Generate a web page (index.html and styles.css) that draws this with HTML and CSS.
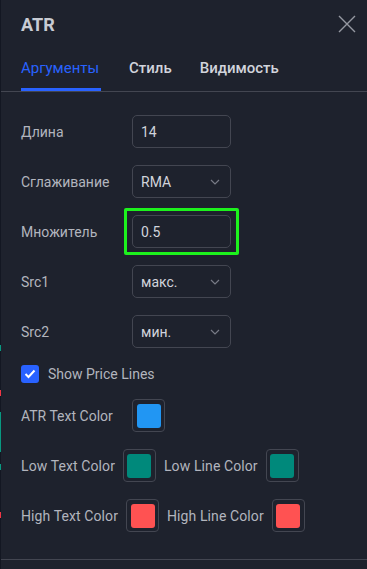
FILE: index.html
```html
<!DOCTYPE html>
<html lang="ru">
<head>
  <meta charset="UTF-8" />
  <meta name="viewport" content="width=device-width, initial-scale=1.0" />
  <title>ATR</title>
  <link rel="stylesheet" href="styles.css">
</head>
<body>
  <div class="edge">
    <span class="mark mark-green" style="top:345px"></span>
    <span class="mark mark-red" style="top:390px"></span>
    <span class="mark mark-teal" style="top:412px;height:40px"></span>
    <span class="mark mark-teal" style="top:464px"></span>
    <span class="mark mark-red" style="top:512px"></span>
  </div>

  <div class="dialog">
    <div class="header">
      <span class="title">ATR</span>
      <svg class="close" width="18" height="18" viewBox="0 0 18 18">
        <path d="M1 1L17 17M17 1L1 17" stroke="#9598a1" stroke-width="1.4" fill="none" />
      </svg>
    </div>

    <div class="tabs">
      <div class="tab active">Аргументы</div>
      <div class="tab">Стиль</div>
      <div class="tab">Видимость</div>
    </div>

    <div class="content">
      <div class="row">
        <label class="label">Длина</label>
        <div class="field">14</div>
      </div>
      <div class="row">
        <label class="label">Сглаживание</label>
        <div class="field select">RMA
          <svg class="chevron" width="10" height="6" viewBox="0 0 10 6"><path d="M1 1L5 5L9 1" stroke="#787b86" stroke-width="1.2" fill="none" /></svg>
        </div>
      </div>
      <div class="row">
        <label class="label">Множитель</label>
        <div class="highlight">
          <div class="field">0.5</div>
        </div>
      </div>
      <div class="row">
        <label class="label">Src1</label>
        <div class="field select">макс.
          <svg class="chevron" width="10" height="6" viewBox="0 0 10 6"><path d="M1 1L5 5L9 1" stroke="#787b86" stroke-width="1.2" fill="none" /></svg>
        </div>
      </div>
      <div class="row">
        <label class="label">Src2</label>
        <div class="field select">мин.
          <svg class="chevron" width="10" height="6" viewBox="0 0 10 6"><path d="M1 1L5 5L9 1" stroke="#787b86" stroke-width="1.2" fill="none" /></svg>
        </div>
      </div>

      <div class="check-row">
        <span class="checkbox">
          <svg width="12" height="10" viewBox="0 0 12 10"><path d="M1.5 5L4.5 8L10.5 1.5" stroke="#fff" stroke-width="2" fill="none" /></svg>
        </span>
        <span class="check-text">Show Price Lines</span>
      </div>

      <div class="row">
        <label class="label">ATR Text Color</label>
        <div class="swatch"><span class="color blue"></span></div>
      </div>
      <div class="row inline">
        <span class="label-inline">Low Text Color</span>
        <div class="swatch"><span class="color teal"></span></div>
        <span class="label-inline">Low Line Color</span>
        <div class="swatch"><span class="color teal"></span></div>
      </div>
      <div class="row inline">
        <span class="label-inline">High Text Color</span>
        <div class="swatch"><span class="color red"></span></div>
        <span class="label-inline">High Line Color</span>
        <div class="swatch"><span class="color red"></span></div>
      </div>
    </div>

    <div class="footer"></div>
  </div>
</body>
</html>
```

FILE: styles.css
```css
body {
  margin: 0;
  padding: 0;
  background: #1e222d;
  font-family: Roboto, "Noto Sans", sans-serif;
  font-size: 14px;
  color: #b2b5be;
  display: flex;
  min-height: 569px;
  overflow: hidden;
}
.edge {
  width: 1px;
  background: #131722;
  position: relative;
}
.mark {
  position: absolute;
  left: 0;
  width: 1px;
  height: 6px;
}
.mark-green { background: #089981; }
.mark-red { background: #f23645; }
.mark-teal { background: #089981; }
.dialog {
  flex: 1;
  display: flex;
  flex-direction: column;
}
.header {
  height: 48px;
  display: flex;
  align-items: center;
  justify-content: space-between;
  padding: 0 11px 0 20px;
}
.title {
  font-size: 18px;
  font-weight: bold;
  color: #c8cbd3;
}
.close {
  margin-top: -1px;
}
.tabs {
  display: flex;
  gap: 28px;
  padding: 0 20px;
  height: 43px;
  border-bottom: 1px solid #434651;
}
.tab {
  font-size: 15px;
  color: #d1d4dc;
  font-weight: 500;
  display: flex;
  align-items: center;
  padding-bottom: 3px;
  box-sizing: border-box;
}
.tab.active {
  color: #2962ff;
  font-weight: 400;
  border-bottom: 3px solid #2962ff;
  padding-bottom: 0;
  width: 80px;
}
.content {
  padding: 23px 20px 27px;
  display: flex;
  flex-direction: column;
  gap: 17px;
}
.row {
  display: flex;
  align-items: center;
  height: 33px;
}
.label {
  width: 111px;
  flex-shrink: 0;
}
.label-inline {
  letter-spacing: 0.1px;
}
.field {
  width: 99px;
  height: 33px;
  box-sizing: border-box;
  border: 1px solid #434651;
  border-radius: 5px;
  padding: 0 8px;
  display: flex;
  align-items: center;
  justify-content: space-between;
  color: #d1d4dc;
}
.highlight {
  border: 3px solid #1df21d;
  border-radius: 2px;
  padding: 4px 5px;
  margin: -7px -8px;
}
.chevron {
  margin-right: 2px;
}
.check-row {
  display: flex;
  align-items: center;
  height: 17px;
  gap: 9px;
}
.checkbox {
  width: 18px;
  height: 18px;
  border-radius: 3px;
  background: #2962ff;
  display: flex;
  align-items: center;
  justify-content: center;
}
.row.inline {
  gap: 8px;
}
.swatch {
  width: 33px;
  height: 33px;
  box-sizing: border-box;
  border: 1px solid #434651;
  border-radius: 4px;
  display: flex;
  align-items: center;
  justify-content: center;
}
.color {
  width: 24px;
  height: 24px;
  border-radius: 3px;
}
.blue { background: #2196f3; }
.teal { background: #00897b; }
.red { background: #ff5252; }
.footer {
  border-top: 1px solid #434651;
  height: 12px;
}
```
